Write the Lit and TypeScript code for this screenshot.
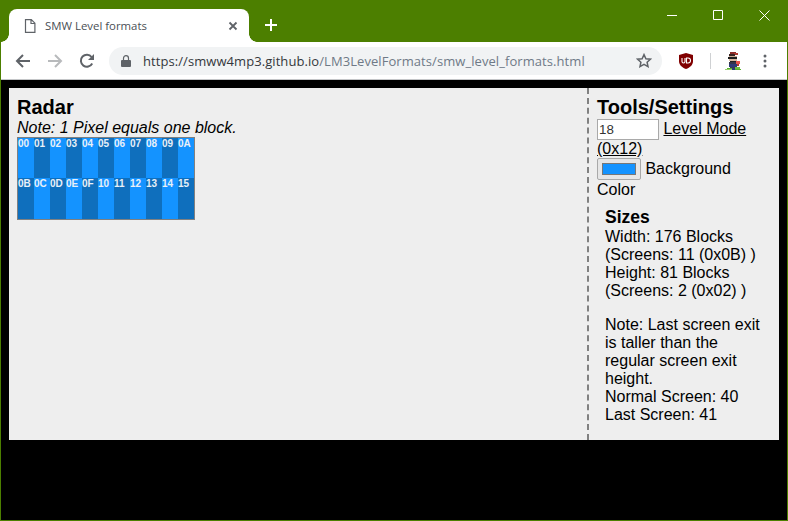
import { html, css, LitElement } from 'lit'
import { customElement } from 'lit/decorators.js'

// sprite for the profile avatar, one entry per colored pixel run: x, y, w, h, color
const AVATAR: [number, number, number, number, string][] = [
  [5, 0, 6, 2, '#8a2c28'],
  [9, 1, 4, 2, '#b03a30'],
  [4, 2, 6, 2, '#3a2522'],
  [4, 4, 8, 1, '#c8a890'],
  [3, 5, 9, 2, '#1c1c1c'],
  [4, 7, 8, 2, '#d8b8a0'],
  [5, 9, 7, 1, '#222222'],
  [4, 10, 7, 2, '#34344a'],
  [11, 9, 4, 3, '#e8554c'],
  [4, 12, 8, 3, '#2d3a78'],
  [12, 12, 2, 2, '#b03a30'],
  [5, 15, 7, 1, '#3a3a50'],
  [2, 16, 5, 1, '#58b030'],
  [7, 16, 3, 2, '#2d3a78'],
  [10, 15, 5, 2, '#70c040'],
  [0, 17, 7, 1, '#9ad070'],
  [10, 17, 6, 1, '#58b030'],
]

@customElement('app-root')
export class AppRoot extends LitElement {
  static styles = css`
    :host {
      display: block;
      width: 788px;
      height: 521px;
      overflow: hidden;
      box-sizing: border-box;
      background: #000;
      border: 1px solid #4c7f00;
      border-top: 0;
      font-family: 'Liberation Sans', Arial, sans-serif;
    }
    .titlebar {
      height: 42px;
      background: #4c7f00;
      display: flex;
      padding-top: 9px;
      box-sizing: border-box;
      margin: 0 -1px;
    }
    .tab {
      position: relative;
      width: 240px;
      margin-left: 9px;
      height: 33px;
      background: #fff;
      border-radius: 8px 8px 0 0;
      display: flex;
      align-items: center;
      box-sizing: border-box;
      padding: 0 11px 0 15px;
      font: 11.4px 'Open Sans', sans-serif;
      color: #4a4f55;
    }
    .tab::before,
    .tab::after {
      content: '';
      position: absolute;
      bottom: 0;
      width: 8px;
      height: 8px;
    }
    .tab::before {
      left: -8px;
      background: radial-gradient(circle at 0 0, transparent 7.5px, #fff 8px);
    }
    .tab::after {
      right: -8px;
      background: radial-gradient(circle at 100% 0, transparent 7.5px, #fff 8px);
    }
    .tab-title {
      flex: 1;
      margin-left: 9px;
      white-space: nowrap;
    }
    .plus {
      margin: 9px 0 0 15px;
      width: 14px;
      height: 14px;
    }
    .controls {
      margin-left: auto;
      display: flex;
      height: 30px;
      margin-top: -9px;
    }
    .controls div {
      width: 46px;
      height: 30px;
      display: flex;
      align-items: center;
      justify-content: center;
    }
    .controls div:last-child {
      width: 47px;
    }
    .toolbar {
      height: 38px;
      background: #fff;
      border-bottom: 1px solid #c4c6c8;
      box-sizing: border-box;
      display: flex;
      align-items: center;
    }
    .nav {
      width: 32px;
      display: flex;
      justify-content: center;
    }
    .nav:first-child {
      margin-left: 6px;
    }
    .omnibox {
      width: 553px;
      height: 28px;
      margin-left: 6px;
      border-radius: 14px;
      background: #f1f3f4;
      display: flex;
      align-items: center;
      padding: 0 10px 0 12px;
      box-sizing: border-box;
      font: 13px 'Open Sans', sans-serif;
      letter-spacing: 0.07px;
      color: #6f7a87;
      white-space: nowrap;
    }
    .omnibox b {
      font-weight: 400;
      color: #35383c;
    }
    .lock {
      margin-right: 12px;
    }
    .url {
      flex: 1;
    }
    .ublock {
      margin-left: 17px;
      display: flex;
    }
    .sep {
      width: 1px;
      height: 16px;
      background: #cfd1d3;
      margin: 0 14px 0 17px;
    }
    .avatar {
      display: flex;
    }
    .dots {
      margin-left: 22px;
      display: flex;
    }
    .page {
      margin: 8px 8px 0 8px;
      height: 352px;
      width: 770px;
      background: #eee;
      display: flex;
      color: #000;
      font-size: 16px;
      line-height: 18px;
    }
    .main {
      flex: 1;
      padding: 8px;
    }
    h1 {
      margin: 0;
      font-size: 20px;
      line-height: 23px;
      font-weight: 700;
    }
    .note {
      font-style: italic;
      height: 18px;
      line-height: 17px;
    }
    .radar {
      display: grid;
      grid-template-columns: repeat(11, 16px);
      grid-template-rows: 40px 41px;
      width: 176px;
      border: 1px solid #808080;
    }
    .cell {
      font-size: 10px;
      font-weight: 700;
      line-height: 11px;
      color: #e8f0f8;
      white-space: nowrap;
      background: #1493ff;
    }
    .cell.odd {
      background: #0f6fbd;
    }
    .side {
      width: 192px;
      box-sizing: border-box;
      border-left: 2px dashed #808080;
      padding: 8px 14px 0 8px;
    }
    .level input {
      width: 62px;
      height: 21px;
      box-sizing: border-box;
      border: 1px solid #a9a9a9;
      padding: 1px;
      margin: 0;
      font: 13.33px 'Liberation Sans', Arial, sans-serif;
      color: #333;
      background: #fff;
    }
    a {
      color: #000;
      text-decoration: underline;
    }
    .swatch {
      display: inline-block;
      box-sizing: border-box;
      width: 44px;
      height: 22px;
      margin-bottom: 1px;
      padding: 4px;
      border: 1px solid #a9a9a9;
      border-radius: 2px;
      background: #e6e6e6;
      vertical-align: -7px;
    }
    .swatch span {
      display: block;
      height: 100%;
      box-sizing: border-box;
      background: #1493ff;
      border: 1px solid #777;
    }
    .sizes {
      padding: 8px 0 0 8px;
    }
    h2 {
      margin: 0;
      font-size: 17.5px;
      line-height: 21px;
      font-weight: 700;
    }
    p {
      margin: 0 0 16px;
    }
  `

  private cells() {
    const out = []
    for (let i = 0; i < 22; i++) {
      const label = i.toString(16).toUpperCase().padStart(2, '0')
      out.push(html`<div class="cell ${i % 2 ? 'odd' : ''}">${label}</div>`)
    }
    return out
  }

  render() {
    return html`
      <div class="titlebar">
        <div class="tab">
          <svg width="12" height="14" viewBox="0 0 12 14" fill="none" stroke="#5f6368" stroke-width="1.2">
            <path d="M1.5 .6h5.8l3.6 3.6v9.2h-9.4zM7 .8v3.7h3.8" />
          </svg>
          <span class="tab-title">SMW Level formats</span>
          <svg width="10" height="10" viewBox="0 0 10 10" stroke="#5f6368" stroke-width="1.8">
            <path d="M1.5 1.5l7 7M8.5 1.5l-7 7" />
          </svg>
        </div>
        <svg class="plus" viewBox="0 0 14 14" stroke="#fff" stroke-width="2"><path d="M7 1v12M1 7h12" /></svg>
        <div class="controls">
          <div><svg width="10" height="10" stroke="#fff"><path d="M0 5.5h10" /></svg></div>
          <div><svg width="10" height="10" fill="none" stroke="#fff"><path d="M.5.5h9v9h-9z" /></svg></div>
          <div><svg width="11" height="11" stroke="#fff"><path d="M.5.5l10 10M10.5.5l-10 10" /></svg></div>
        </div>
      </div>
      <div class="toolbar">
        <div class="nav">
          <svg width="16" height="14" viewBox="0 0 16 14" fill="none" stroke="#5f6368" stroke-width="2">
            <path d="M15 7H2M8 1L2 7l6 6" />
          </svg>
        </div>
        <div class="nav">
          <svg width="16" height="14" viewBox="0 0 16 14" fill="none" stroke="#b8babc" stroke-width="2">
            <path d="M1 7h13M8 1l6 6-6 6" />
          </svg>
        </div>
        <div class="nav">
          <svg width="16" height="16" viewBox="0 0 16 16" fill="none" stroke="#5f6368" stroke-width="2">
            <path d="M13.2 10.5A6 6 0 1 1 12.6 4" />
            <path d="M15 1v6H9z" fill="#5f6368" stroke="none" />
          </svg>
        </div>
        <div class="omnibox">
          <svg class="lock" width="10" height="12" viewBox="0 0 10 12" fill="#5f6368">
            <path d="M1 5h8a1 1 0 0 1 1 1v5a1 1 0 0 1-1 1H1a1 1 0 0 1-1-1V6a1 1 0 0 1 1-1z" />
            <path d="M2.5 5V3.2a2.5 2.5 0 0 1 5 0V5" fill="none" stroke="#5f6368" stroke-width="1.2" />
          </svg>
          <span class="url"><b>https://smww4mp3.github.io</b>/LM3LevelFormats/smw_level_formats.html</span>
          <svg width="16" height="15" viewBox="0 0 16 15" fill="none" stroke="#5f6368" stroke-width="1.5">
            <path d="M8 1.6l1.9 4.1 4.5.5-3.3 3 .9 4.4L8 11.4l-4 2.2.9-4.4-3.3-3 4.5-.5z" />
          </svg>
        </div>
        <div class="ublock">
          <svg width="14" height="16" viewBox="0 0 14 16">
            <path d="M7 0l7 2v6c0 4-3 6.500-7 8-4-1.500-7-4-7-8V2z" fill="#800000" />
            <path d="M3 5v3.500a1.500 1.500 0 0 0 3 0V5M7.500 5v5h1.500a2.500 2.500 0 0 0 0-5z" fill="none" stroke="#fff" stroke-width="1.100" />
          </svg>
        </div>
        <div class="sep"></div>
        <div class="avatar">
          <svg width="16" height="18" viewBox="0 0 16 18" shape-rendering="crispEdges">
            ${AVATAR.map(
              ([x, y, w, h, c]) => html`<svg><rect x=${x} y=${y} width=${w} height=${h} fill=${c} /></svg>`
            )}
          </svg>
        </div>
        <div class="dots">
          <svg width="4" height="14" viewBox="0 0 4 14" fill="#5f6368">
            <circle cx="2" cy="2" r="1.500" /><circle cx="2" cy="7" r="1.500" /><circle cx="2" cy="12" r="1.500" />
          </svg>
        </div>
      </div>
      <div class="page">
        <div class="main">
          <h1>Radar</h1>
          <div class="note">Note: 1 Pixel equals one block.</div>
          <div class="radar">${this.cells()}</div>
        </div>
        <div class="side">
          <h1>Tools/Settings</h1>
          <div class="level"><input value="18" /> <a href="#">Level Mode (0x12)</a></div>
          <div><span class="swatch"><span></span></span> Background Color</div>
          <div class="sizes">
            <h2>Sizes</h2>
            <p>Width: 176 Blocks (Screens: 11 (0x0B) )<br />Height: 81 Blocks (Screens: 2 (0x02) )</p>
            <div>Note: Last screen exit is taller than the regular screen exit height.<br />Normal Screen: 40<br />Last Screen: 41</div>
          </div>
        </div>
      </div>
    `
  }
}
